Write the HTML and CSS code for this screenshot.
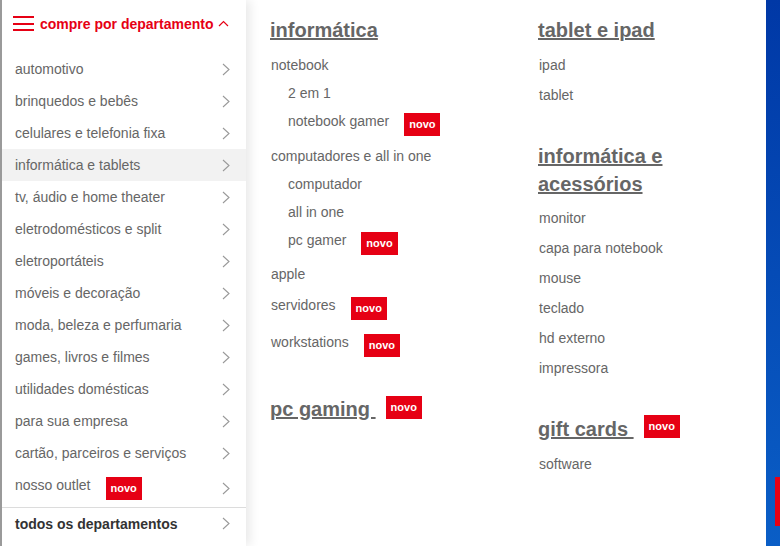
FILE: index.html
```html
<!DOCTYPE html>
<html lang="pt-BR">
<head>
<meta charset="utf-8">
<title>compre por departamento</title>
<link rel="stylesheet" href="styles.css">
</head>
<body>
<div class="page">
  <aside class="dept">
    <div class="dept-head">
      <span class="burger"><i></i><i></i><i></i></span>
      <span class="dept-title">compre por departamento</span>
      <svg class="caret" viewBox="0 0 11 7"><polyline points="1,6 5.5,1.5 10,6" fill="none" stroke="#e60014" stroke-width="1.2"/></svg>
    </div>
    <ul class="dept-list">
      <li class="dept-item"><span>automotivo</span><svg class="chev" viewBox="0 0 8 13"><polyline points="1,1 7,6.5 1,12" fill="none" stroke="#999" stroke-width="1.1"/></svg></li>
      <li class="dept-item"><span>brinquedos e bebês</span><svg class="chev" viewBox="0 0 8 13"><polyline points="1,1 7,6.5 1,12" fill="none" stroke="#999" stroke-width="1.1"/></svg></li>
      <li class="dept-item"><span>celulares e telefonia fixa</span><svg class="chev" viewBox="0 0 8 13"><polyline points="1,1 7,6.5 1,12" fill="none" stroke="#999" stroke-width="1.1"/></svg></li>
      <li class="dept-item active"><span>informática e tablets</span><svg class="chev" viewBox="0 0 8 13"><polyline points="1,1 7,6.5 1,12" fill="none" stroke="#999" stroke-width="1.1"/></svg></li>
      <li class="dept-item"><span>tv, áudio e home theater</span><svg class="chev" viewBox="0 0 8 13"><polyline points="1,1 7,6.5 1,12" fill="none" stroke="#999" stroke-width="1.1"/></svg></li>
      <li class="dept-item"><span>eletrodomésticos e split</span><svg class="chev" viewBox="0 0 8 13"><polyline points="1,1 7,6.5 1,12" fill="none" stroke="#999" stroke-width="1.1"/></svg></li>
      <li class="dept-item"><span>eletroportáteis</span><svg class="chev" viewBox="0 0 8 13"><polyline points="1,1 7,6.5 1,12" fill="none" stroke="#999" stroke-width="1.1"/></svg></li>
      <li class="dept-item"><span>móveis e decoração</span><svg class="chev" viewBox="0 0 8 13"><polyline points="1,1 7,6.5 1,12" fill="none" stroke="#999" stroke-width="1.1"/></svg></li>
      <li class="dept-item"><span>moda, beleza e perfumaria</span><svg class="chev" viewBox="0 0 8 13"><polyline points="1,1 7,6.5 1,12" fill="none" stroke="#999" stroke-width="1.1"/></svg></li>
      <li class="dept-item"><span>games, livros e filmes</span><svg class="chev" viewBox="0 0 8 13"><polyline points="1,1 7,6.5 1,12" fill="none" stroke="#999" stroke-width="1.1"/></svg></li>
      <li class="dept-item"><span>utilidades domésticas</span><svg class="chev" viewBox="0 0 8 13"><polyline points="1,1 7,6.5 1,12" fill="none" stroke="#999" stroke-width="1.1"/></svg></li>
      <li class="dept-item"><span>para sua empresa</span><svg class="chev" viewBox="0 0 8 13"><polyline points="1,1 7,6.5 1,12" fill="none" stroke="#999" stroke-width="1.1"/></svg></li>
      <li class="dept-item"><span>cartão, parceiros e serviços</span><svg class="chev" viewBox="0 0 8 13"><polyline points="1,1 7,6.5 1,12" fill="none" stroke="#999" stroke-width="1.1"/></svg></li>
      <li class="dept-item outlet"><span class="outlet-label">nosso outlet</span><span class="badge">novo</span><svg class="chev" viewBox="0 0 8 13"><polyline points="1,1 7,6.5 1,12" fill="none" stroke="#999" stroke-width="1.1"/></svg></li>
    </ul>
    <div class="dept-all"><span>todos os departamentos</span><svg class="chev" viewBox="0 0 8 13"><polyline points="1,1 7,6.5 1,12" fill="none" stroke="#999" stroke-width="1.1"/></svg></div>
  </aside>

  <main class="menu">
    <section class="col col-1">
      <h2 class="heading"><span class="ul">informática</span></h2>
      <ul class="links first">
        <li class="link">notebook</li>
        <li class="link sub">2 em 1</li>
        <li class="link sub has-badge gap-6"><span>notebook gamer</span><span class="badge">novo</span></li>
        <li class="link">computadores e all in one</li>
        <li class="link sub">computador</li>
        <li class="link sub">all in one</li>
        <li class="link sub has-badge gap-5"><span>pc gamer</span><span class="badge">novo</span></li>
        <li class="link gap-3">apple</li>
        <li class="link has-badge gap-8"><span>servidores</span><span class="badge">novo</span></li>
        <li class="link has-badge"><span>workstations</span><span class="badge">novo</span></li>
      </ul>
      <h2 class="heading pc-gaming"><span class="ul">pc gaming&nbsp;</span><span class="badge">novo</span></h2>
    </section>

    <section class="col col-2">
      <h2 class="heading"><span class="ul">tablet e ipad</span></h2>
      <ul class="links wide first-2">
        <li class="link">ipad</li>
        <li class="link">tablet</li>
      </ul>
      <h2 class="heading two-line"><span class="ul">informática e acessórios</span></h2>
      <ul class="links wide after-two">
        <li class="link">monitor</li>
        <li class="link">capa para notebook</li>
        <li class="link">mouse</li>
        <li class="link">teclado</li>
        <li class="link">hd externo</li>
        <li class="link">impressora</li>
      </ul>
      <h2 class="heading gift"><span class="ul">gift cards&nbsp;</span><span class="badge">novo</span></h2>
      <ul class="links wide last">
        <li class="link">software</li>
      </ul>
    </section>
  </main>

  <div class="edge"><span class="edge-mark"></span></div>
</div>
</body>
</html>
```

FILE: styles.css
```css
* {
  box-sizing: border-box;
}

body {
  margin: 0;
  background: #fff;
  font-family: "Liberation Sans", Arial, sans-serif;
}

.page {
  display: flex;
  width: 780px;
  height: 546px;
  overflow: hidden;
}

/* left department list */
.dept {
  width: 246px;
  flex: none;
  display: flex;
  flex-direction: column;
  background: #fff;
  border-left: 2px solid #9a9a9a;
  box-shadow: 4px 0 10px rgba(0, 0, 0, 0.09);
}

.dept-head {
  height: 47px;
  margin-bottom: 6px;
  display: flex;
  align-items: center;
  padding-left: 11px;
}

.burger {
  width: 21px;
  height: 15px;
  display: flex;
  flex-direction: column;
  justify-content: space-between;
  flex: none;
}

.burger i {
  display: block;
  height: 2px;
  background: #e60014;
}

.dept-title {
  margin-left: 6px;
  font-size: 14px;
  font-weight: bold;
  color: #e60014;
}

.caret {
  width: 11px;
  height: 7px;
  margin-left: 5px;
  flex: none;
}

.dept-list {
  list-style: none;
  margin: 0;
  padding: 0;
}

.dept-item {
  height: 32px;
  display: flex;
  align-items: center;
  padding: 0 16px 0 13px;
  font-size: 14px;
  color: #666;
}

.dept-item.active {
  background: #f2f2f2;
}

.dept-item.outlet {
  height: 38px;
}

.outlet-label {
  padding-bottom: 6px;
}

.chev {
  width: 8px;
  height: 13px;
  margin-left: auto;
  flex: none;
}

.dept-all {
  height: 32px;
  display: flex;
  align-items: center;
  padding: 0 16px 0 13px;
  border-top: 1px solid #dcdcdc;
  font-size: 14px;
  font-weight: bold;
  color: #333;
}

/* badge */
.badge {
  flex: none;
  height: 23px;
  line-height: 23px;
  padding: 0 5px;
  margin-left: 15px;
  background: #e60014;
  color: #fff;
  font-size: 11px;
  font-weight: bold;
}

/* right mega menu */
.menu {
  flex: 1;
  display: flex;
  padding-left: 24px;
}

.col {
  padding-top: 18px;
}

.col-1 {
  width: 268px;
}

.col-2 {
  width: 200px;
}

.heading {
  margin: 0;
  display: flex;
  align-items: flex-start;
  font-size: 20px;
  line-height: 24px;
  font-weight: bold;
  color: #666;
}

.heading .ul {
  text-decoration: underline;
  text-decoration-thickness: 2px;
}

.heading .badge {
  margin-left: 10px;
  margin-top: -1px;
}

.heading.gift .badge {
  margin-top: -2px;
}

.heading.two-line {
  line-height: 28px;
  margin-top: 32px;
}

.heading.pc-gaming {
  margin-top: 40px;
}

.heading.gift {
  margin-top: 34px;
}

.links {
  list-style: none;
  margin: 0;
  padding: 0;
}

.links.first {
  margin-top: 9px;
}

.links.first-2 {
  margin-top: 8px;
}

.links.after-two {
  margin-top: 5px;
}

.links.last {
  margin-top: 8px;
}

.link {
  padding-left: 1px;
  font-size: 14px;
  line-height: 28px;
  color: #666;
}

.links.wide .link {
  line-height: 30px;
}

.link.sub {
  padding-left: 18px;
}

.link.has-badge {
  display: flex;
  align-items: flex-start;
}

.link.has-badge .badge {
  margin-top: 6px;
}

.gap-3 { margin-bottom: 3px; }
.gap-5 { margin-bottom: 5px; }
.gap-6 { margin-bottom: 6px; }
.gap-8 { margin-bottom: 8px; }

/* right page edge */
.edge {
  width: 14px;
  flex: none;
  padding: 477px 0 0 9px;
  background: linear-gradient(#0038a6, #0a5ec6);
}

.edge-mark {
  display: block;
  width: 5px;
  height: 49px;
  background: #e60014;
}
```
